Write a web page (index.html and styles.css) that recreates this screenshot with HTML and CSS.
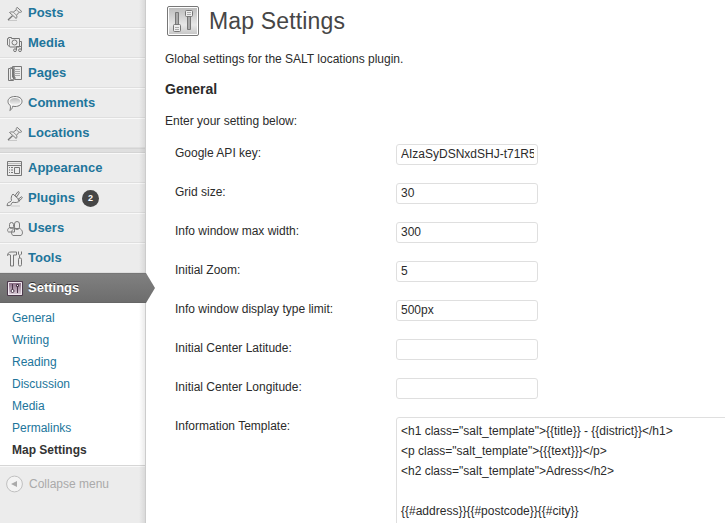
FILE: index.html
```html
<!DOCTYPE html>
<html lang="en">
<head>
<meta charset="utf-8">
<title>Map Settings</title>
<link rel="stylesheet" href="styles.css">
</head>
<body>
<svg class="defs" width="0" height="0" aria-hidden="true">
  <defs>
    <linearGradient id="metal" x1="0" y1="0" x2="0" y2="1"><stop offset="0" stop-color="#b8b8b8"/><stop offset="1" stop-color="#f2f2f2"/></linearGradient>
    <linearGradient id="plum" x1="0" y1="0" x2="0" y2="1"><stop offset="0" stop-color="#80627c"/><stop offset="1" stop-color="#e0d4de"/></linearGradient>
    <linearGradient id="panel" x1="0" y1="0" x2="0" y2="1"><stop offset="0" stop-color="#bdbdbd"/><stop offset=".65" stop-color="#e7e7e7"/><stop offset="1" stop-color="#c8c8c8"/></linearGradient>
    <symbol id="pin" viewBox="0 0 18 18">
      <path d="M3 16.500h9" stroke="#c8c8c8"/>
      <path d="M3 16 7.500 11.700" stroke="#777" fill="none" stroke-width="1.300"/>
      <path d="M4.500 8.500c1.200-.8 2.500-.8 3.700-.3l3.100-2.400c-.2-1 0-1.900.8-2.500l4.700 4.200c-.7.800-1.600 1-2.600.7L11.500 11.200c.6 1.200.5 2.300-.3 3.300z" fill="#ececec" stroke="#7c7c7c"/>
      <path d="m8.200 8.200 3.300 3M11.300 5.800l2.900 2.400" stroke="#999"/>
    </symbol>
  </defs>
</svg>
<div class="page">
  <nav class="sidebar">
    <a class="item"><svg class="icon" viewBox="0 0 18 18"><use href="#pin"/></svg>Posts</a>
    <a class="item"><svg class="icon" viewBox="0 0 18 18" fill="#e8e8e8" stroke="#777"><path d="M3.500 4.500v-1h3v1h8v8.500H5l-2.500-2v-6.500z"/><path d="M4.500 5v7.500" stroke="#999"/><circle cx="9.500" cy="8.500" r="2.500"/><path d="M11.500 16v-3.500h5V16M14.500 7.500h2v5" fill="none"/><circle cx="10" cy="16.200" r="1.400"/><circle cx="15" cy="16.200" r="1.400"/></svg>Media</a>
    <a class="item"><svg class="icon" viewBox="0 0 18 18" fill="#ededed" stroke="#777"><path d="M3.500 4.500h5v12h-5z"/><path d="M5.500 3.500h4v12h-4z" stroke="#999"/><path d="M7.500 2.500h9v13h-6.500l-2.500-2.500z"/><path d="M9 5.500h6M9 7.500h6M9 9.500h6M10 11.500h5" stroke="#aaa"/><path d="M7.500 13h2.500v2.500" fill="none"/></svg>Pages</a>
    <a class="item"><svg class="icon" viewBox="0 0 18 18"><path d="M10 2.500c4.200 0 7 2 7 4.800S14.300 12.500 10 12.500c-.8 0-1.600-.1-2.300-.3-.4 2-1.200 3.500-2.900 4.300.7-1.600.8-3.300.5-5C3.800 10.600 3 9.200 3 7.300c0-2.800 2.800-4.800 7-4.800z" fill="#f6f6f6" stroke="#777"/><ellipse cx="10" cy="7.400" rx="5.300" ry="3.400" fill="url(#metal)"/></svg>Comments</a>
    <a class="item"><svg class="icon" viewBox="0 0 18 18"><use href="#pin"/></svg>Locations</a>
    <div class="separator"></div>
    <a class="item"><svg class="icon" viewBox="0 0 18 18" fill="#eee" stroke="#777"><path d="M2.500 2.500h14v14h-14z"/><path d="M3 4.500h13" stroke="#bbb"/><path d="M2.500 6.500h14M9.500 8.500h5v6h-5zM4 8.500h1M6 8.500h2M4 11h1M6 11h2M4 13.500h1M6 13.500h2"/></svg>Appearance</a>
    <a class="item"><svg class="icon" viewBox="0 0 18 18" fill="#f0f0f0" stroke="#777"><path d="M6 17h9" stroke="#c8c8c8"/><path d="m10 6.500 2.900-3.700c.9-.4 1.600.2 1.300 1.100l-2.300 3.800zM13 10.500l3.300-2.700c.9-.2 1.300.8.7 1.500l-3 2.700z"/><path d="m8 5 7 6.500c-1.800 2-4.500 2.500-7 1.700l-1.500 1.100c.1 1-.4 1.700-1.700 2.200l-2.800.2.700-2.400c.6-.9 1.300-1.200 2.300-1.200l1.500-1.600C5.800 9 6.300 6.800 8 5z"/></svg>Plugins<span class="badge">2</span></a>
    <a class="item"><svg class="icon" viewBox="0 0 18 18" fill="#f0f0f0" stroke="#7c7c7c"><path d="M5 8.500c-2.400.5-3.200 3.600-1.500 4.500h6V9z"/><rect x="4.500" y="3.500" width="4" height="6" rx="2"/><path d="M9.500 9.500c-3.200 1-4 5.500-1.500 7h8c2.500-1.500 1.700-6-1.500-7z"/><rect x="9.500" y="2.500" width="5" height="8" rx="2.500"/></svg>Users</a>
    <a class="item"><svg class="icon" viewBox="0 0 18 18" fill="#f0f0f0" stroke="#777"><path d="M2.500 6.500c.3-2.400 1.300-3.500 3.500-3.500h5.500v3H8.500v11h-3v-11c-1.200-.7-2.200-.5-3 .5z"/><path d="M14.500 9V6.500L13.500 5V2.500M15 6.500 16.500 5V2.500"/><rect x="13.500" y="9" width="3" height="8" rx="1.300"/></svg>Tools</a>
    <a class="item current"><svg class="icon" viewBox="0 0 18 18"><path d="M2.500 2.500h15v14h-15z" fill="url(#plum)" stroke="#4c3a4c"/><path d="M3.500 3.500h13v12h-13z" fill="none" stroke="#f0e8f0"/><path d="M7.500 5v6M12.500 8v6" stroke="#463246"/><circle cx="7.500" cy="12" r="1.500" fill="#fff" stroke="#463246"/><path d="M11.500 5.500h2v2h-2z" fill="#fff" stroke="#463246"/></svg>Settings</a>
    <div class="submenu">
      <a>General</a><a>Writing</a><a>Reading</a><a>Discussion</a><a>Media</a><a>Permalinks</a><a class="active">Map Settings</a>
    </div>
    <div class="collapse"><svg class="collapse-icon" viewBox="0 0 18 18"><circle cx="8.500" cy="9" r="7.900" fill="#f3f3f3" stroke="#c0c0c0"/><path d="M5 9 11 6v6z" fill="#aaa"/></svg>Collapse menu</div>
  </nav>
  <main class="content">
    <h1><svg class="heading-icon" viewBox="0 0 32 32"><rect x=".5" y=".5" width="31" height="29" rx="1.500" fill="#fff" stroke="#777"/><path d="M2 2h28v26H2z" fill="url(#panel)"/><path d="M8.500 6.500h3v13h-3zM20.500 10.500h3v13h-3z" fill="#aaa" stroke="#777"/><rect x="6.500" y="18.500" width="7" height="7" rx="1" fill="#eee" stroke="#777"/><rect x="18.500" y="4.500" width="7" height="6" rx="1" fill="#eee" stroke="#777"/><path d="M8 21.500h4M8 23.500h4M20 6.500h4M20 8.500h4" stroke="#aaa"/></svg>Map Settings</h1>
    <p class="intro">Global settings for the SALT locations plugin.</p>
    <h3>General</h3>
    <p class="hint">Enter your setting below:</p>
    <form class="form">
      <label for="key">Google API key:</label><input id="key" value="AIzaSyDSNxdSHJ-t71R5">
      <label for="grid">Grid size:</label><input id="grid" value="30">
      <label for="width">Info window max width:</label><input id="width" value="300">
      <label for="zoom">Initial Zoom:</label><input id="zoom" value="5">
      <label for="limit">Info window display type limit:</label><input id="limit" value="500px">
      <label for="lat">Initial Center Latitude:</label><input id="lat">
      <label for="lng">Initial Center Longitude:</label><input id="lng">
      <label for="tpl">Information Template:</label><textarea id="tpl">&lt;h1 class="salt_template"&gt;{{title}} - {{district}}&lt;/h1&gt;
&lt;p class="salt_template"&gt;{{{text}}}&lt;/p&gt;
&lt;h2 class="salt_template"&gt;Adress&lt;/h2&gt;

{{#address}}{{#postcode}}{{#city}}</textarea>
    </form>
  </main>
</div>
</body>
</html>
```

FILE: styles.css
```css
* { box-sizing: border-box; }
body { margin: 0; background: #fff; color: #2b2b2b; font: 12px/20px "Liberation Sans", Arial, sans-serif; }
.defs { display: block; height: 0; }
.page { display: flex; height: 523px; overflow: hidden; }

.sidebar { position: relative; flex: 0 0 146px; margin-top: -2px; height: 525px; background: #ececec; }
.sidebar::after { content: ""; position: absolute; top: 0; right: 0; bottom: 0; width: 6px; border-right: 1px solid #ccc; background: linear-gradient(to right, rgba(0,0,0,0), rgba(0,0,0,.08)); }
.item { display: flex; align-items: center; height: 30px; padding: 0 0 0 5px; border-top: 1px solid #f9f9f9; border-bottom: 1px solid #dfdfdf; color: #21759b; font-size: 13px; font-weight: bold; line-height: 18px; }
.icon { width: 18px; height: 18px; margin-right: 5px; fill: none; overflow: visible; }
.badge { margin: 1px 0 0 7px; width: 17px; height: 17px; border-radius: 50%; background: #464646; color: #fff; font-size: 9px; line-height: 17px; text-align: center; }
.separator { height: 5px; border-bottom: 1px solid #d4d4d4; border-top: 1px solid #d4d4d4; background: #dfdfdf; }
.current { position: relative; z-index: 1; border-top: 1px solid #777; border-bottom: 1px solid #666; background: linear-gradient(#808080, #6d6d6d); color: #fff; text-shadow: 0 -1px 0 #333; }
.current::after { content: ""; position: absolute; left: 100%; top: -1px; width: 9px; height: 30px; background: linear-gradient(#808080, #6d6d6d); clip-path: polygon(0 0, 100% 50%, 0 100%); }
.submenu { height: 163px; padding: 4px 0 0 12px; border-bottom: 1px solid #d6d6d6; background: #fff; }
.submenu a { display: block; height: 22px; line-height: 22px; color: #21759b; }
.submenu .active { color: #333; font-weight: bold; }
.collapse { display: flex; align-items: center; height: 35px; padding-left: 6px; border-top: 1px solid #f9f9f9; color: #aaa; }
.collapse-icon { width: 18px; height: 18px; margin-right: 5px; }

.content { flex: 1; min-width: 0; padding: 6px 0 0 19px; }
h1 { display: flex; margin: 0; height: 31px; padding-left: 2px; color: #464646; font-size: 23px; font-weight: normal; line-height: 30px; letter-spacing: .15px; }
.heading-icon { width: 32px; height: 32px; margin-right: 10px; }
.intro { margin: 12px 0 0; }
h3 { margin: 10px 0 0; font-size: 14px; line-height: 20px; }
.hint { margin: 12px 0 0; }
.form { display: grid; grid-template-columns: 221px 1fr; grid-template-rows: repeat(7, 39px) 140px; margin: 13px 0 0 10px; }
.form label { line-height: 18px; }
input { width: 142px; height: 21px; margin: 0; padding: 0 3px 2px 4px; border: 1px solid #dfdfdf; border-radius: 3px; outline: 0; background: #fff; color: #2b2b2b; font: 12px "Liberation Sans", Arial, sans-serif; }
textarea { width: 400px; height: 140px; margin: 0; padding: 3px 4px; border: 1px solid #dfdfdf; border-radius: 3px; resize: none; overflow: hidden; background: #fff; color: #2b2b2b; font: 12px/20px "Liberation Sans", Arial, sans-serif; }
```
